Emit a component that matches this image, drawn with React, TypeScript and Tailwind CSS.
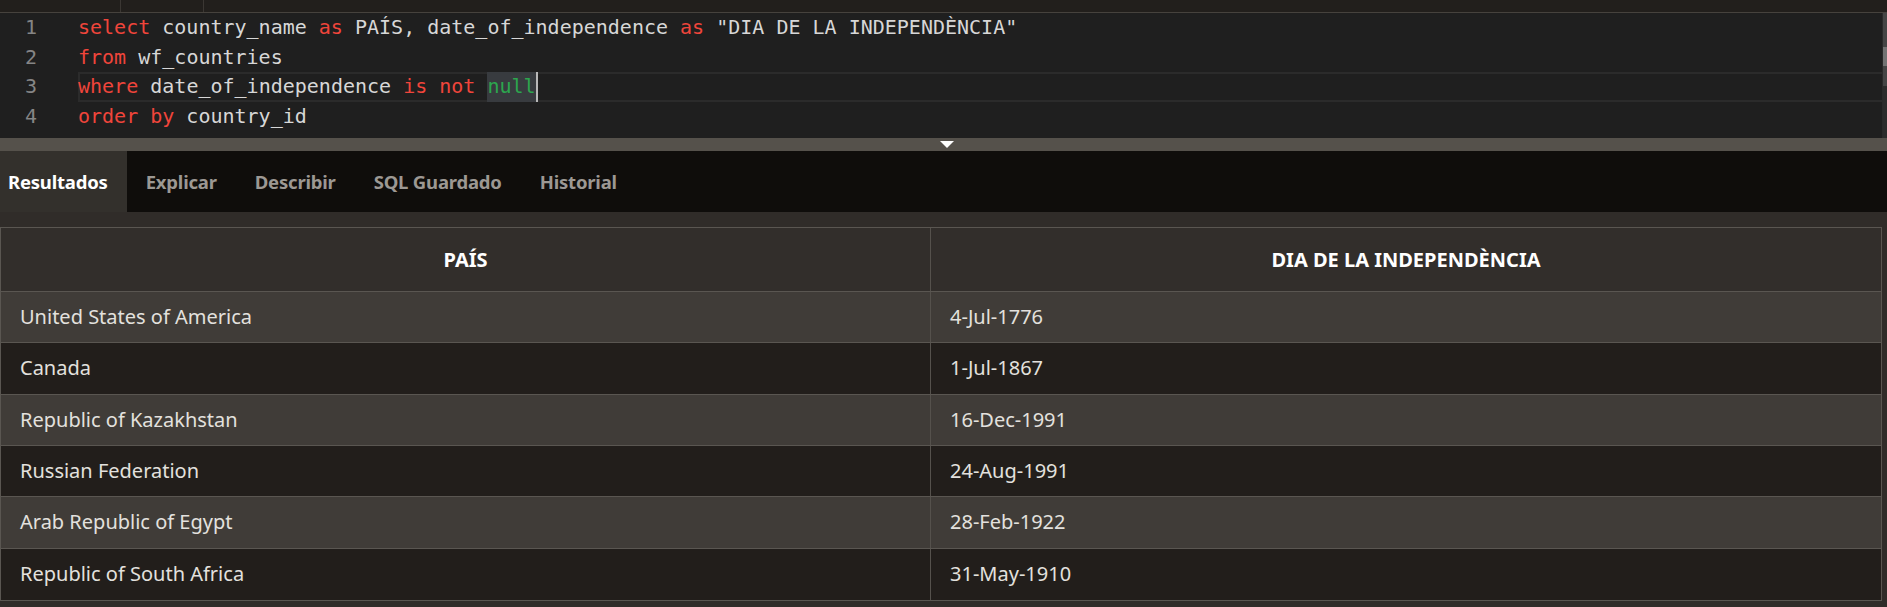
import React from 'react';

type Tok = { t: string; k?: 'kw' | 'id' | 'null' };

const CODE: Tok[][] = [
  [
    { t: 'select', k: 'kw' },
    { t: ' country_name ' },
    { t: 'as', k: 'kw' },
    { t: ' PAÍS, date_of_independence ' },
    { t: 'as', k: 'kw' },
    { t: ' "DIA DE LA INDEPENDÈNCIA"' },
  ],
  [{ t: 'from', k: 'kw' }, { t: ' wf_countries' }],
  [
    { t: 'where', k: 'kw' },
    { t: ' date_of_independence ' },
    { t: 'is not', k: 'kw' },
    { t: ' ' },
    { t: 'null', k: 'null' },
  ],
  [{ t: 'order by', k: 'kw' }, { t: ' country_id' }],
];

const TABS = ['Resultados', 'Explicar', 'Describir', 'SQL Guardado', 'Historial'];

const ROWS = [
  ['United States of America', '4-Jul-1776'],
  ['Canada', '1-Jul-1867'],
  ['Republic of Kazakhstan', '16-Dec-1991'],
  ['Russian Federation', '24-Aug-1991'],
  ['Arab Republic of Egypt', '28-Feb-1922'],
  ['Republic of South Africa', '31-May-1910'],
];

const Token: React.FC<{ tok: Tok }> = ({ tok }) => {
  if (tok.k === 'kw') return <span className="text-[#f0453b]">{tok.t}</span>;
  if (tok.k === 'null')
    return (
      <span className="inline-block h-[29.67px] align-top bg-[#383b3f] text-[#2ca64e] border-r-2 border-[#b8b8b8]">
        {tok.t}
      </span>
    );
  return <span className="whitespace-pre">{tok.t}</span>;
};

const App: React.FC = () => {
  return (
    <div className="w-[1887px] h-[607px] overflow-hidden bg-[#302c29] flex flex-col font-['Noto_Sans',sans-serif]">
      {/* worksheet tabs strip, cut off at top */}
      <div className="h-[13px] shrink-0 bg-[#221f1c] border-b border-[#46423d] flex">
        <div className="w-[121px] border-r border-[#3b3733]" />
        <div className="w-[83px] border-r border-[#3b3733]" />
      </div>

      {/* SQL editor */}
      <div className="h-[125px] shrink-0 bg-[#1f1f1f] flex font-['DejaVu_Sans_Mono',monospace] text-[20px] leading-[29.67px]">
        <div className="w-[78px] shrink-0">
          {CODE.map((_, i) => (
            <div key={i} className="w-[37px] text-right text-[#858585]">
              {i + 1}
            </div>
          ))}
        </div>
        <div className="flex-1 text-[#d7d7d7] whitespace-pre">
          {CODE.map((line, i) => (
            <div
              key={i}
              className={`h-[29.67px] ${i === 2 ? 'shadow-[inset_2px_2px_0_0_#2b2b2b,inset_0_-2px_0_0_#2b2b2b]' : ''}`}
            >
              {line.map((tok, j) => (
                <Token key={j} tok={tok} />
              ))}
            </div>
          ))}
        </div>
        <div className="w-[5px] shrink-0 flex flex-col border-l border-[#2a2a2a]">
          <div className="h-[34px] bg-[#454545]" />
          <div className="h-[19px] bg-[#737373]" />
          <div className="h-[20px] bg-[#454545]" />
          <div className="flex-1 bg-[#2c2c2c]" />
        </div>
      </div>

      {/* splitter */}
      <div className="h-[13px] shrink-0 bg-[#55514b] flex items-center justify-center pl-[7px]">
        <svg width="14" height="7" viewBox="0 0 14 7">
          <polygon points="0,0 14,0 7,7" fill="#ffffff" />
        </svg>
      </div>

      {/* result tabs */}
      <div className="h-[61px] shrink-0 bg-[#0f0d0b] flex -ml-[11px]">
        {TABS.map((tab, i) => (
          <div
            key={tab}
            className={`flex items-center px-[19px] text-[18.5px] font-bold tracking-[-0.2px] ${
              i === 0 ? 'bg-[#33302c] text-white' : 'text-[#9c9893]'
            }`}
          >
            {tab}
          </div>
        ))}
      </div>

      <div className="h-[15px] shrink-0" />

      {/* results grid */}
      <div className="w-[1882px] shrink-0 border border-[#5a5651] text-[20px]">
        <div className="grid grid-cols-[930px_950px] h-[64px] bg-[#322e2b] border-b border-[#5a5651] font-bold text-white">
          <div className="flex items-center justify-center border-r border-[#55514c]">PAÍS</div>
          <div className="flex items-center justify-center">DIA DE LA INDEPENDÈNCIA</div>
        </div>
        {ROWS.map((row, i) => (
          <div
            key={row[0]}
            className={`grid grid-cols-[930px_950px] h-[51.33px] text-[#e3e1de] ${
              i % 2 === 0 ? 'bg-[#403c38]' : 'bg-[#221e1b]'
            } ${i < ROWS.length - 1 ? 'border-b border-[#5a5651]' : ''}`}
          >
            <div className="flex items-center pl-[19px] border-r border-[#55514c]">{row[0]}</div>
            <div className="flex items-center pl-[19px]">{row[1]}</div>
          </div>
        ))}
      </div>
    </div>
  );
};

export default App;
